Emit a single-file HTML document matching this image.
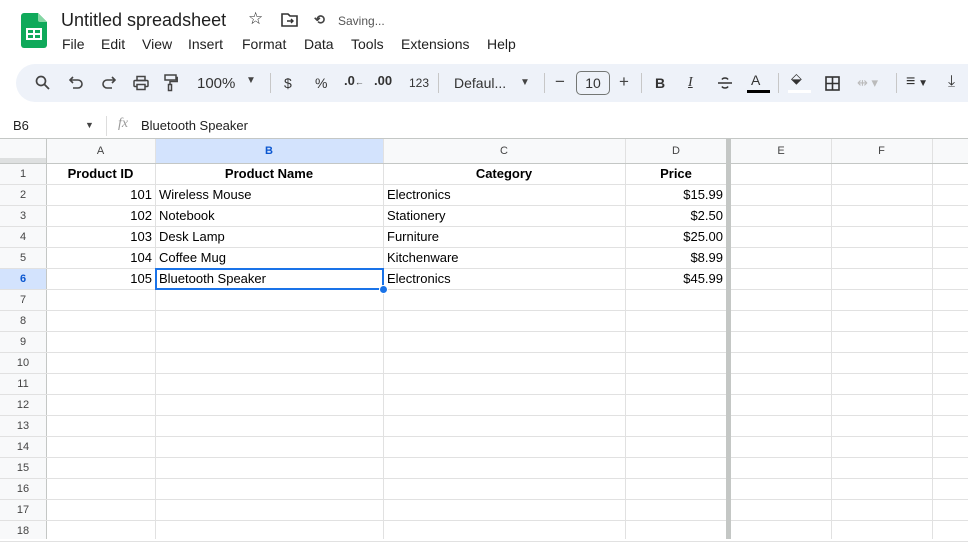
<!DOCTYPE html>
<html><head><meta charset="utf-8"><style>
*{margin:0;padding:0;box-sizing:border-box}
body{width:968px;height:539px;overflow:hidden;background:#fff;font-family:"Liberation Sans",Arial,sans-serif;color:#1f1f1f;position:relative}
.a{position:absolute}
.t{position:absolute;white-space:nowrap}
.cell{position:absolute;font-size:13px;line-height:21px;white-space:nowrap;color:#000}
</style></head><body>
<svg class="a" style="left:21px;top:13px" width="26" height="35" viewBox="0 0 26 35">
<path d="M3 0H17L26 9V32a3 3 0 0 1-3 3H3a3 3 0 0 1-3-3V3a3 3 0 0 1 3-3z" fill="#0fa95a"/>
<path d="M17 0L26 9H19a2 2 0 0 1-2-2z" fill="#86d7a4"/>
<rect x="6" y="16" width="14" height="10" fill="none" stroke="#fff" stroke-width="2"/>
<line x1="6" y1="21" x2="20" y2="21" stroke="#fff" stroke-width="2"/><line x1="13" y1="16" x2="13" y2="26" stroke="#fff" stroke-width="2"/>
</svg>
<div class="t" style="left:61px;top:10px;font-size:18px;color:#1f1f1f">Untitled spreadsheet</div>
<div class="t" style="left:248px;top:9px;font-size:17px">☆</div>
<svg class="a" style="left:281px;top:13px" width="17" height="14" viewBox="0 0 17 14"><path d="M1 1h6l2 2h7v10H1z" fill="none" stroke="#333" stroke-width="1.6"/><path d="M6 8h6M10 6l2 2-2 2" fill="none" stroke="#333" stroke-width="1.4"/></svg>
<div class="t" style="left:314px;top:12px;font-size:13px;font-weight:bold;color:#444">⟲</div>
<div class="t" style="left:338px;top:14px;font-size:12px;color:#555">Saving...</div>
<div class="t" style="left:62px;top:36px;font-size:14px">File</div>
<div class="t" style="left:101px;top:36px;font-size:14px">Edit</div>
<div class="t" style="left:142px;top:36px;font-size:14px">View</div>
<div class="t" style="left:188px;top:36px;font-size:14px">Insert</div>
<div class="t" style="left:242px;top:36px;font-size:14px">Format</div>
<div class="t" style="left:304px;top:36px;font-size:14px">Data</div>
<div class="t" style="left:351px;top:36px;font-size:14px">Tools</div>
<div class="t" style="left:401px;top:36px;font-size:14px">Extensions</div>
<div class="t" style="left:487px;top:36px;font-size:14px">Help</div>
<div class="a" style="left:16px;top:64px;width:970px;height:38px;border-radius:19px;background:#eef2f9"></div>
<svg class="a" style="left:35px;top:75px" width="16" height="16" viewBox="0 0 16 16"><circle cx="6" cy="6" r="4.5" fill="none" stroke="#444" stroke-width="1.7"/><path d="M9.5 9.5L14 14" stroke="#444" stroke-width="1.8"/></svg>
<svg class="a" style="left:69px;top:76px" width="15" height="14" viewBox="0 0 15 14"><path d="M4 1L1 4l3 3" fill="none" stroke="#444" stroke-width="1.6"/><path d="M1.5 4H9a4 4 0 0 1 0 8H4" fill="none" stroke="#444" stroke-width="1.6"/></svg>
<svg class="a" style="left:101px;top:76px" width="15" height="14" viewBox="0 0 15 14"><path d="M11 1l3 3-3 3" fill="none" stroke="#444" stroke-width="1.6"/><path d="M13.5 4H6a4 4 0 0 0 0 8h5" fill="none" stroke="#444" stroke-width="1.6"/></svg>
<svg class="a" style="left:133px;top:75px" width="16" height="16" viewBox="0 0 16 16"><rect x="4" y="1.5" width="8" height="4" fill="none" stroke="#444" stroke-width="1.5"/><rect x="1" y="5.5" width="14" height="6" rx="1" fill="none" stroke="#444" stroke-width="1.5"/><rect x="4" y="9.5" width="8" height="5" fill="#eef2f9" stroke="#444" stroke-width="1.5"/></svg>
<svg class="a" style="left:164px;top:74px" width="14" height="18" viewBox="0 0 14 18"><rect x="1" y="1" width="11" height="5" fill="none" stroke="#444" stroke-width="1.5"/><path d="M12 3.5h1.2v4H6v3" fill="none" stroke="#444" stroke-width="1.5"/><rect x="4.5" y="10.5" width="3" height="6" fill="none" stroke="#444" stroke-width="1.5"/></svg>
<div class="t" style="left:197px;top:75px;font-size:15px;color:#333">100%</div>
<div class="t" style="left:246px;top:75px;font-size:10px;color:#444">▼</div>
<div class="a" style="left:270px;top:73px;width:1px;height:20px;background:#c7c7c7"></div>
<div class="t" style="left:284px;top:75px;font-size:14px;color:#333">$</div>
<div class="t" style="left:315px;top:75px;font-size:14px;color:#333">%</div>
<div class="t" style="left:344px;top:73px;font-size:13px;font-weight:bold;color:#333">.0<span style="font-size:9px">←</span></div>
<div class="t" style="left:374px;top:73px;font-size:13px;font-weight:bold;color:#333">.00</div>
<div class="t" style="left:409px;top:76px;font-size:12px;color:#333">123</div>
<div class="a" style="left:438px;top:73px;width:1px;height:20px;background:#c7c7c7"></div>
<div class="t" style="left:454px;top:75px;font-size:14px;color:#333">Defaul...</div>
<div class="t" style="left:520px;top:77px;font-size:10px;color:#444">▼</div>
<div class="a" style="left:544px;top:73px;width:1px;height:20px;background:#c7c7c7"></div>
<div class="t" style="left:555px;top:72px;font-size:17px;color:#444">−</div>
<div class="a" style="left:576px;top:71px;width:34px;height:24px;border:1px solid #747775;border-radius:5px;font-size:14px;text-align:center;line-height:22px;color:#333">10</div>
<div class="t" style="left:619px;top:72px;font-size:17px;color:#444">+</div>
<div class="a" style="left:641px;top:73px;width:1px;height:20px;background:#c7c7c7"></div>
<div class="t" style="left:655px;top:75px;font-size:14px;font-weight:bold;color:#333">B</div>
<div class="t" style="left:688px;top:75px;font-size:14px;font-style:italic;font-family:'Liberation Serif',serif;text-decoration:underline;color:#333">I</div>
<svg class="a" style="left:717px;top:76px" width="16" height="14" viewBox="0 0 16 14"><path d="M1 7h14" stroke="#333" stroke-width="1.5"/><path d="M11 3.5C10 1.5 6 1.5 5 3.5M5 10.5c1 2 5 2 6 0" fill="none" stroke="#333" stroke-width="1.5"/></svg>
<div class="t" style="left:751px;top:72px;font-size:14px;color:#333">A</div>
<div class="a" style="left:747px;top:90px;width:23px;height:3px;background:#000"></div>
<div class="a" style="left:778px;top:73px;width:1px;height:20px;background:#c7c7c7"></div>
<div class="t" style="left:791px;top:70px;font-size:14px;color:#333">⬙</div>
<div class="a" style="left:788px;top:90px;width:23px;height:3px;background:#fff"></div>
<svg class="a" style="left:825px;top:76px" width="15" height="15" viewBox="0 0 15 15"><rect x="1" y="1" width="13" height="13" fill="none" stroke="#333" stroke-width="1.6"/><path d="M7.5 1v13M1 7.5h13" stroke="#333" stroke-width="1.6"/></svg>
<div class="t" style="left:857px;top:75px;font-size:13px;color:#bbb">⇹ ▾</div>
<div class="a" style="left:896px;top:73px;width:1px;height:20px;background:#c7c7c7"></div>
<div class="t" style="left:906px;top:73px;font-size:16px;color:#333">≡<span style="font-size:10px"> ▼</span></div>
<div class="t" style="left:948px;top:73px;font-size:16px;color:#333">⤓</div>
<div class="t" style="left:13px;top:118px;font-size:13px">B6</div>
<div class="t" style="left:85px;top:120px;font-size:9px;color:#444">▼</div>
<div class="a" style="left:106px;top:116px;width:1px;height:20px;background:#ddd"></div>
<div class="t" style="left:118px;top:116px;font-size:14px;font-style:italic;font-family:'Liberation Serif',serif;color:#999">fx</div>
<div class="t" style="left:141px;top:118px;font-size:13px">Bluetooth Speaker</div>
<div class="a" style="left:0;top:138px;width:968px;height:1px;background:#c4c7c5"></div>
<div id="g"></div>
<script>
var cols=[[46,155,'A'],[155,383,'B'],[383,625,'C'],[625,727,'D'],[731,831,'E'],[831,932,'F'],[932,1040,'G']];
var h='';
h+='<div class="a" style="left:0;top:139px;width:968px;height:24px;background:#f8f9fa"></div>';
h+='<div class="a" style="left:0;top:139px;width:46px;height:400px;background:#f8f9fa"></div>';
h+='<div class="a" style="left:155px;top:139px;width:228px;height:24px;background:#d3e3fd"></div>';
h+='<div class="a" style="left:0;top:268px;width:46px;height:21px;background:#d3e3fd"></div>';
h+='<div class="a" style="left:0;top:158px;width:46px;height:5px;background:#c4c7c5;opacity:.5"></div>';
cols.forEach(function(c){h+='<div class="a" style="left:'+c[1]+'px;top:139px;width:1px;height:400px;background:#e1e1e1"></div>';
h+='<div class="t" style="left:'+c[0]+'px;width:'+(c[1]-c[0])+'px;top:145px;text-align:center;font-size:11px;color:'+(c[2]=='B'?'#0b57d0;font-weight:bold':'#444')+'">'+c[2]+'</div>';});
h+='<div class="a" style="left:46px;top:139px;width:1px;height:400px;background:#c4c7c5"></div>';
h+='<div class="a" style="left:0;top:163px;width:968px;height:1px;background:#c4c7c5"></div>';
for(var r=1;r<=18;r++){var y=163+(r-1)*21;
h+='<div class="a" style="left:0;top:'+(y+21)+'px;width:968px;height:1px;background:#e1e1e1"></div>';
h+='<div class="t" style="left:0;width:46px;top:'+(y+5)+'px;text-align:center;font-size:11px;color:'+(r==6?'#0b57d0;font-weight:bold':'#444')+'">'+r+'</div>';}
h+='<div class="a" style="left:726px;top:139px;width:5px;height:400px;background:#c4c7c5"></div>';
var d=[['Product ID','Product Name','Category','Price'],['101','Wireless Mouse','Electronics','$15.99'],['102','Notebook','Stationery','$2.50'],['103','Desk Lamp','Furniture','$25.00'],['104','Coffee Mug','Kitchenware','$8.99'],['105','Bluetooth Speaker','Electronics','$45.99']];
d.forEach(function(row,i){var y=163+i*21;
if(i==0){for(var k=0;k<4;k++){var c=cols[k];h+='<div class="cell" style="left:'+c[0]+'px;width:'+(c[1]-c[0])+'px;top:'+y+'px;text-align:center;font-weight:bold">'+row[k]+'</div>';}}
else{h+='<div class="cell" style="left:46px;width:106px;top:'+y+'px;text-align:right">'+row[0]+'</div>';
h+='<div class="cell" style="left:159px;top:'+y+'px">'+row[1]+'</div>';
h+='<div class="cell" style="left:387px;top:'+y+'px">'+row[2]+'</div>';
h+='<div class="cell" style="left:625px;width:98px;top:'+y+'px;text-align:right">'+row[3]+'</div>';}});
h+='<div class="a" style="left:155px;top:268px;width:229px;height:22px;border:2px solid #1a73e8"></div>';
h+='<div class="a" style="left:379px;top:285px;width:9px;height:9px;border-radius:50%;background:#1a73e8;border:1px solid #fff"></div>';
document.getElementById('g').innerHTML=h;
</script>
</body></html>
